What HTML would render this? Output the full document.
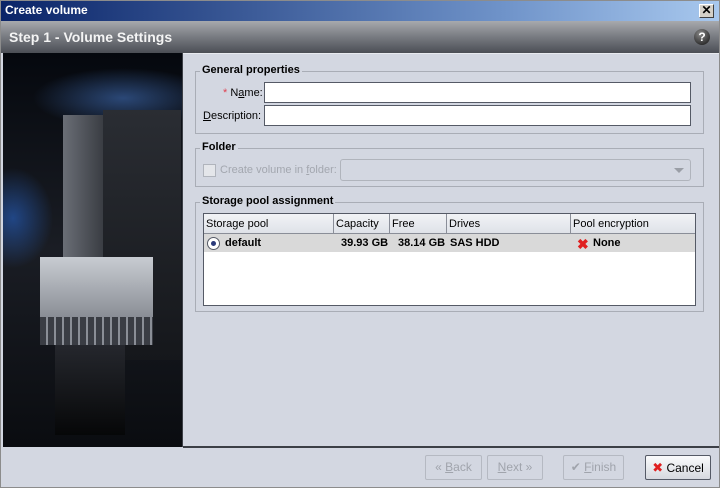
<!DOCTYPE html>
<html><head><style>
*{margin:0;padding:0;box-sizing:border-box}
body{width:720px;height:488px;position:relative;overflow:hidden;background:#d3d7e1;font-family:"Liberation Sans",sans-serif;font-size:11px;color:#000}
.a{position:absolute}
.grp{position:absolute;border:1px solid #a9adb6}
.gt{position:absolute;top:-8px;left:4px;background:#d3d7e1;padding:0 2px;font-weight:bold;font-size:11px}
.in{position:absolute;background:#fff;border:1px solid #555a66;height:21px}
.th{position:absolute;top:0;height:20px;border-right:1px solid #8a8e98;border-bottom:1px solid #8a8e98;background:linear-gradient(#f2f3f6,#dfe2e8);padding:4px 2px 0;font-size:11px}
.btn{position:absolute;top:455px;height:25px;border:1px solid #b5b9c2;border-radius:2px;color:#a0a4ac;font-size:12px;line-height:23px;text-align:center}
</style></head><body>
<div class="a" style="left:0;top:0;width:720px;height:488px;border:1px solid #8c8c8c"></div>
<div class="a" style="left:1px;top:1px;width:718px;height:20px;background:linear-gradient(90deg,#0a2468,#6f93c9 70%,#a8c8ee)"></div>
<div class="a" style="left:5px;top:3px;color:#fff;font-weight:bold;font-size:12px">Create volume</div>
<div class="a" style="left:699px;top:4px;width:15px;height:14px;background:#d4d0c8;border:1px solid;border-color:#fff #404040 #404040 #fff;font-size:12px;line-height:11px;text-align:center;font-weight:bold">✕</div>
<div class="a" style="left:1px;top:21px;width:718px;height:32px;background:linear-gradient(#a7a9ad,#7c7f85 45%,#4b4e55)"></div>
<div class="a" style="left:9px;top:29px;color:#f4f4f4;font-weight:bold;font-size:14px">Step 1 - Volume Settings</div>
<div class="a" style="left:694px;top:29px;width:16px;height:16px;border-radius:50%;background:radial-gradient(circle at 40% 30%,#888,#111);color:#fff;font-weight:bold;font-size:12px;line-height:16px;text-align:center">?</div>
<div class="a" style="left:3px;top:53px;width:180px;height:394px;background:radial-gradient(ellipse 90px 30px at 120px 45px,rgba(70,120,200,.55),transparent),radial-gradient(ellipse 40px 50px at 10px 165px,rgba(40,100,200,.6),transparent),linear-gradient(#05080e,#1a1d24 50%,#0a0c10)"></div>
<div class="a" style="left:63px;top:115px;width:40px;height:150px;background:linear-gradient(90deg,#6a6e76,#3a3d43)"></div>
<div class="a" style="left:103px;top:110px;width:78px;height:250px;background:linear-gradient(#2a2d33,#15171b)"></div>
<div class="a" style="left:40px;top:257px;width:113px;height:60px;background:linear-gradient(#c8ccd2,#8a8e96)"></div>
<div class="a" style="left:40px;top:317px;width:113px;height:28px;background:repeating-linear-gradient(90deg,#3a3d44 0 6px,#8a8e96 6px 8px)"></div>
<div class="a" style="left:55px;top:345px;width:70px;height:90px;background:linear-gradient(#25272d,#060708)"></div>
<div class="a" style="left:183px;top:53px;width:536px;height:1px;background:#e8eaef"></div>
<div class="grp" style="left:195px;top:71px;width:509px;height:63px"><div class="gt">General properties</div></div>
<div class="a" style="left:223px;top:87px"><span style="color:#e04050">*</span> N<u>a</u>me:</div>
<div class="in" style="left:264px;top:82px;width:427px"></div>
<div class="a" style="left:203px;top:110px"><u>D</u>escription:</div>
<div class="in" style="left:264px;top:105px;width:427px"></div>
<div class="grp" style="left:195px;top:148px;width:509px;height:39px"><div class="gt">Folder</div></div>
<div class="a" style="left:203px;top:164px;width:13px;height:13px;border:1px solid #b0b4bc;background:#e4e6ea"></div>
<div class="a" style="left:220px;top:164px;color:#a3a7af">Create volume in <u>f</u>older:</div>
<div class="a" style="left:340px;top:159px;width:351px;height:22px;border:1px solid #b0b4bc;border-radius:3px"></div>
<div class="a" style="left:674px;top:168px;border:5px solid transparent;border-top-color:#9a9ea6"></div>
<div class="grp" style="left:195px;top:202px;width:509px;height:110px"><div class="gt">Storage pool assignment</div></div>
<div class="a" style="left:203px;top:213px;width:493px;height:93px;background:#fff;border:1px solid #555a66;overflow:hidden">
<div class="th" style="left:0;width:130px">Storage pool</div>
<div class="th" style="left:130px;width:56px">Capacity</div>
<div class="th" style="left:186px;width:57px">Free</div>
<div class="th" style="left:243px;width:124px">Drives</div>
<div class="th" style="left:367px;width:125px">Pool encryption</div>
<div class="a" style="left:0;top:20px;width:491px;height:18px;background:#d9d9d9;font-weight:bold">
<div class="a" style="left:3px;top:3px;width:13px;height:13px;border:1px solid #555a66;border-radius:50%;background:#fff"><div class="a" style="left:3px;top:3px;width:5px;height:5px;border-radius:50%;background:#2a3a7a"></div></div>
<div class="a" style="left:21px;top:3px">default</div>
<div class="a" style="left:137px;top:3px">39.93 GB</div>
<div class="a" style="left:194px;top:3px">38.14 GB</div>
<div class="a" style="left:246px;top:3px">SAS HDD</div>
<div class="a" style="left:373px;top:2px;color:#e02020;font-size:14px">✖</div>
<div class="a" style="left:389px;top:3px">None</div>
</div></div>
<div class="a" style="left:183px;top:446px;width:536px;height:2px;background:#3c3f46"></div>
<div class="a" style="left:182px;top:53px;width:1px;height:394px;background:#3c3f46"></div>
<div class="btn" style="left:425px;width:57px">« <u>B</u>ack</div>
<div class="btn" style="left:487px;width:56px"><u>N</u>ext »</div>
<div class="btn" style="left:563px;width:61px">✔ <u>F</u>inish</div>
<div class="btn" style="left:645px;width:66px;border-color:#555a66;color:#000;background:linear-gradient(#fafbfc,#d6d9df)"><span style="color:#e02020;font-size:13px">✖</span> Cancel</div>
</body></html>
